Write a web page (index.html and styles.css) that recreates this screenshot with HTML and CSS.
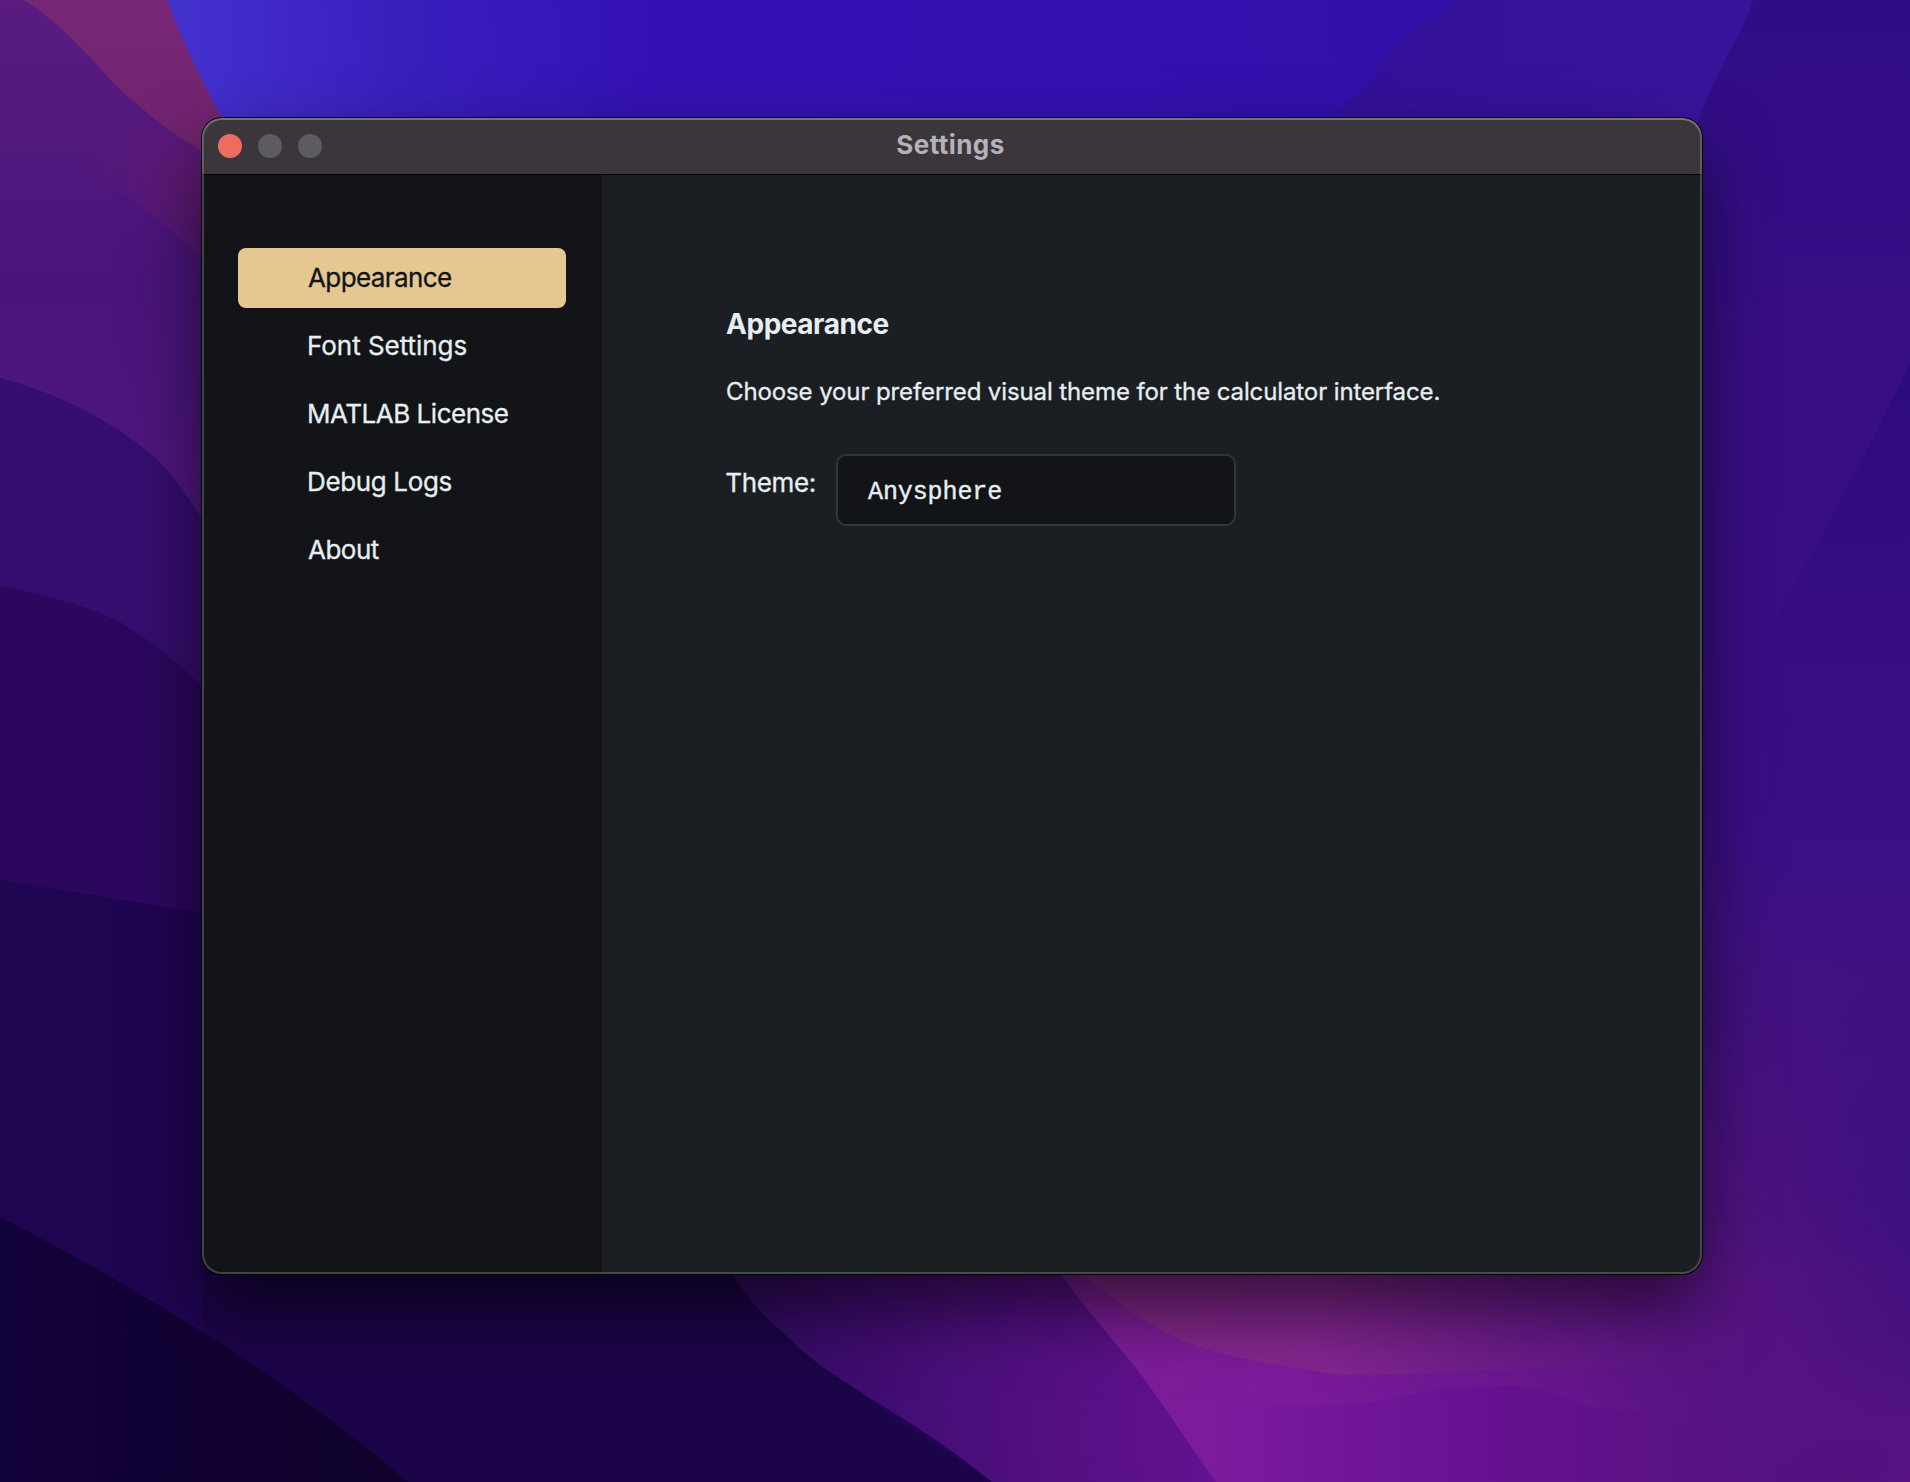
FILE: index.html
```html
<!DOCTYPE html>
<html lang="en">
<head>
<meta charset="utf-8">
<title>Settings</title>
<link rel="stylesheet" href="styles.css">
</head>
<body>
<svg class="wallpaper" viewBox="0 0 1910 1482" preserveAspectRatio="none" aria-hidden="true">
  <defs>
    <linearGradient id="sky" gradientUnits="userSpaceOnUse" x1="180" y1="60" x2="1500" y2="0"><stop offset="0" stop-color="#4331cc"/><stop offset=".06" stop-color="#402ac8"/><stop offset=".16" stop-color="#3a1fbd"/><stop offset=".36" stop-color="#3411b4"/><stop offset=".7" stop-color="#3410b0"/><stop offset="1" stop-color="#2f10a6"/></linearGradient>
    <linearGradient id="ridge" gradientUnits="userSpaceOnUse" x1="1334" y1="0" x2="1753" y2="0"><stop offset="0" stop-color="#321098"/><stop offset="1" stop-color="#3a139c"/></linearGradient>
    <linearGradient id="east" x1="0" y1="0" x2="0" y2="1"><stop offset="0" stop-color="#300d86"/><stop offset=".25" stop-color="#380e86"/><stop offset=".55" stop-color="#3a0f86"/><stop offset=".7" stop-color="#43117f"/><stop offset=".85" stop-color="#541482"/><stop offset="1" stop-color="#551280"/></linearGradient>
    <radialGradient id="eastFade" gradientUnits="userSpaceOnUse" cx="1980" cy="1180" r="270"><stop offset="0" stop-color="#3a0f7e"/><stop offset=".3" stop-color="#3a0f7e" stop-opacity=".85"/><stop offset="1" stop-color="#3a0f7e" stop-opacity="0"/></radialGradient>
    <linearGradient id="facet" gradientUnits="userSpaceOnUse" x1="0" y1="361" x2="0" y2="900"><stop offset="0" stop-color="#2d0a80"/><stop offset=".5" stop-color="#340c84" stop-opacity=".6"/><stop offset="1" stop-color="#380e86" stop-opacity="0"/></linearGradient>
    <linearGradient id="rose" gradientUnits="userSpaceOnUse" x1="0" y1="0" x2="0" y2="240"><stop offset="0" stop-color="#772677"/><stop offset="1" stop-color="#6c2268"/></linearGradient>
    <linearGradient id="west" x1="0" y1="0" x2="0" y2="1"><stop offset="0" stop-color="#5a1c80"/><stop offset=".5" stop-color="#49147c"/><stop offset="1" stop-color="#50187e"/></linearGradient>
    <radialGradient id="glow" gradientUnits="userSpaceOnUse" cx="205" cy="195" r="125"><stop offset="0" stop-color="#641b70" stop-opacity=".85"/><stop offset="1" stop-color="#641b74" stop-opacity="0"/></radialGradient>
    <linearGradient id="night" x1="0" x2="1"><stop offset="0" stop-color="#12023a"/><stop offset="1" stop-color="#10022c"/></linearGradient>
    <linearGradient id="violet" gradientUnits="userSpaceOnUse" x1="780" y1="1420" x2="1170" y2="1370"><stop offset="0" stop-color="#340b66"/><stop offset=".5" stop-color="#4c0f7c"/><stop offset="1" stop-color="#60118c"/></linearGradient>
    <linearGradient id="magenta" gradientUnits="userSpaceOnUse" x1="1060" y1="0" x2="1910" y2="0"><stop offset="0" stop-color="#7d1e96"/><stop offset=".25" stop-color="#7d1b9c"/><stop offset=".6" stop-color="#66168c"/><stop offset=".78" stop-color="#571382" stop-opacity=".6"/><stop offset="1" stop-color="#4a107a" stop-opacity="0"/></linearGradient>
    <linearGradient id="pink" gradientUnits="userSpaceOnUse" x1="1080" y1="0" x2="1760" y2="0"><stop offset="0" stop-color="#86298c"/><stop offset=".35" stop-color="#842690"/><stop offset=".65" stop-color="#6a1b8a"/><stop offset="1" stop-color="#561586" stop-opacity="0"/></linearGradient>
    <linearGradient id="wave" gradientUnits="userSpaceOnUse" x1="1180" y1="0" x2="1800" y2="0"><stop offset="0" stop-color="#7618a0" stop-opacity="0"/><stop offset=".25" stop-color="#73169a"/><stop offset=".55" stop-color="#64118e"/><stop offset="1" stop-color="#50107e" stop-opacity="0"/></linearGradient>
  </defs>
  <rect width="1910" height="1482" fill="#200553"/>
  <path d="M160 0H1500V200H160Z" fill="url(#sky)"/>
  <path d="M1456 0Q1400 35 1380 63C1372 78 1372 85 1364 90Q1348 98 1334 118L1334 200H1760V0Z" fill="url(#ridge)"/>
  <path d="M1753 0Q1746 22 1734 43Q1715 76 1699 118L1600 400V1270L1000 1482H1910V0Z" fill="url(#east)"/>
  <path d="M1910 361C1880 430 1855 470 1783 607Q1750 670 1700 900H1910Z" fill="url(#facet)"/>
  <path d="M1700 900H1910V1482H1700Z" fill="url(#eastFade)"/>
  <path d="M0 0H167Q182 40 199 74L222 118V260H0Z" fill="url(#rose)"/>
  <path d="M0 0H24Q52 18 73 40Q90 57 102 70C118 90 130 98 135 102Q165 130 202 151V560H0Z" fill="url(#west)"/>
  <path d="M73 40Q90 57 102 70C118 90 130 98 135 102Q165 130 202 151V258Q130 190 60 160Z" fill="url(#glow)"/>
  <path d="M0 378Q35 387 67 402C100 416 150 447 173 477Q186 495 202 518V760H0Z" fill="#350e70"/>
  <path d="M0 586C35 592 90 606 122 623Q165 650 202 686V960H0Z" fill="#2b085e"/>
  <path d="M0 1482V1000H202V1200H760V1275Q784 1333 829 1370T992 1482Z" fill="#1c0449"/>
  <path d="M0 880L202 913V1350L0 1217Z" fill="#200552"/>
  <path d="M0 1217Q75 1255 145 1297C250 1360 330 1415 408 1482H0Z" fill="url(#night)"/>
  <path d="M729 1270C745 1295 765 1318 784 1333C815 1365 840 1378 873 1400Q940 1440 992 1482H1300L1140 1260H729Z" fill="url(#violet)"/>
  <path d="M1051 1260C1075 1295 1100 1325 1132 1363C1150 1385 1178 1428 1216 1482H1910V1260Z" fill="url(#magenta)"/>
  <path d="M1065 1260C1110 1296 1140 1322 1181 1340C1230 1360 1290 1366 1338 1375C1400 1376 1500 1368 1608 1369Q1650 1366 1683 1360L1760 1358V1260Z" fill="url(#pink)"/>
  <path d="M1190 1406H1250Q1310 1408 1347 1404C1400 1400 1430 1387 1500 1386C1550 1386 1570 1404 1612 1410Q1645 1412 1660 1418L1730 1443L1800 1482H1190Z" fill="url(#wave)"/>
</svg>

<main class="window">
  <header class="titlebar">
    <div class="lights"><span class="light light-close"></span><span class="light"></span><span class="light"></span></div>
    <h1 class="title">Settings</h1>
  </header>
  <div class="body">
    <nav class="sidebar">
      <a class="item item-active">Appearance</a>
      <a class="item item-fonts">Font Settings</a>
      <a class="item item-license">MATLAB License</a>
      <a class="item item-logs">Debug Logs</a>
      <a class="item">About</a>
    </nav>
    <section class="content">
      <h2 class="heading">Appearance</h2>
      <p class="intro">Choose your preferred visual theme for the calculator interface.</p>
      <div class="field">
        <span class="label">Theme:</span>
        <div class="select">Anysphere</div>
      </div>
    </section>
  </div>
</main>
</body>
</html>
```

FILE: styles.css
```css
* {
  box-sizing: border-box;
}

body {
  margin: 0;
  height: 1482px;
  overflow: hidden;
  background: #1c0449;
  color: #e6eef2;
  font-family: Inter, "Liberation Sans", sans-serif;
}

.wallpaper {
  position: absolute;
  inset: 0;
  width: 1910px;
  height: 1482px;
}

.window {
  position: absolute;
  left: 202px;
  top: 118px;
  width: 1500px;
  height: 1156px;
  display: flex;
  flex-direction: column;
  border-radius: 20px;
  background: #1b1e22;
  box-shadow: 0 0 0 1px #000, 0 36px 72px rgba(0, 0, 0, 0.6);
}

/* light rim along the window edge */
.window::after {
  content: "";
  position: absolute;
  inset: 0;
  border-radius: inherit;
  box-shadow: inset 0 0 0 2px rgba(255, 255, 255, 0.2), inset 0 2px 0 rgba(255, 255, 255, 0.14);
  pointer-events: none;
}

.titlebar {
  display: grid;
  grid-template-columns: 1fr auto 1fr;
  height: 57px;
  padding: 0 19px 0 16px;
  border-bottom: 1px solid #000;
  border-radius: 20px 20px 0 0;
  background: #3a363c;
}

.lights {
  display: flex;
  gap: 16px;
  padding-top: 16px;
}

.light {
  width: 24px;
  height: 24px;
  border-radius: 50%;
  background: #5f5b62;
}

.light-close {
  background: #ed6b5f;
}

.title {
  margin: 0;
  color: #b5b1b8;
  font-size: 26px;
  font-weight: 700;
  letter-spacing: 0.45px;
  line-height: 53px;
}

.body {
  display: flex;
  flex: 1;
}

.sidebar {
  display: flex;
  flex-direction: column;
  gap: 8px;
  width: 400px;
  padding: 73px 36px 0;
  border-radius: 0 0 0 20px;
  background: #121418;
}

.item {
  height: 60px;
  padding-left: 70px;
  border-radius: 8px;
  font-size: 26px;
  letter-spacing: -0.5px;
  line-height: 60px;
  -webkit-text-stroke: 0.3px currentColor;
}

.item-active {
  background: #e5c792;
  color: #121418;
  letter-spacing: -0.6px;
}

.item-fonts,
.item-license,
.item-logs {
  padding-left: 69px;
}

.item-fonts {
  letter-spacing: -0.04px;
}

.item-license {
  letter-spacing: -0.48px;
}

.item-logs {
  letter-spacing: -0.36px;
}

.content {
  flex: 1;
  padding: 132px 0 0 124px;
}

.heading {
  margin: 0;
  font-size: 28px;
  font-weight: 700;
  letter-spacing: -0.46px;
  line-height: 34px;
}

.intro {
  margin: 36px 0 47px;
  font-size: 24px;
  letter-spacing: -0.11px;
  line-height: 30px;
  -webkit-text-stroke: 0.3px currentColor;
}

.field {
  display: flex;
  align-items: flex-start;
  gap: 20px;
}

.label {
  width: 90px;
  margin-top: 13px;
  font-size: 26px;
  letter-spacing: -0.35px;
  line-height: 32px;
  text-indent: -0.7px;
  -webkit-text-stroke: 0.3px currentColor;
}

.select {
  width: 400px;
  height: 72px;
  padding: 2px 30px 0;
  border: 2px solid #2f353d;
  border-radius: 10px;
  background: #121418;
  font-family: "Liberation Mono", monospace;
  font-size: 25px;
  letter-spacing: -0.1px;
  line-height: 70px;
  -webkit-text-stroke: 0.4px currentColor;
}
```
